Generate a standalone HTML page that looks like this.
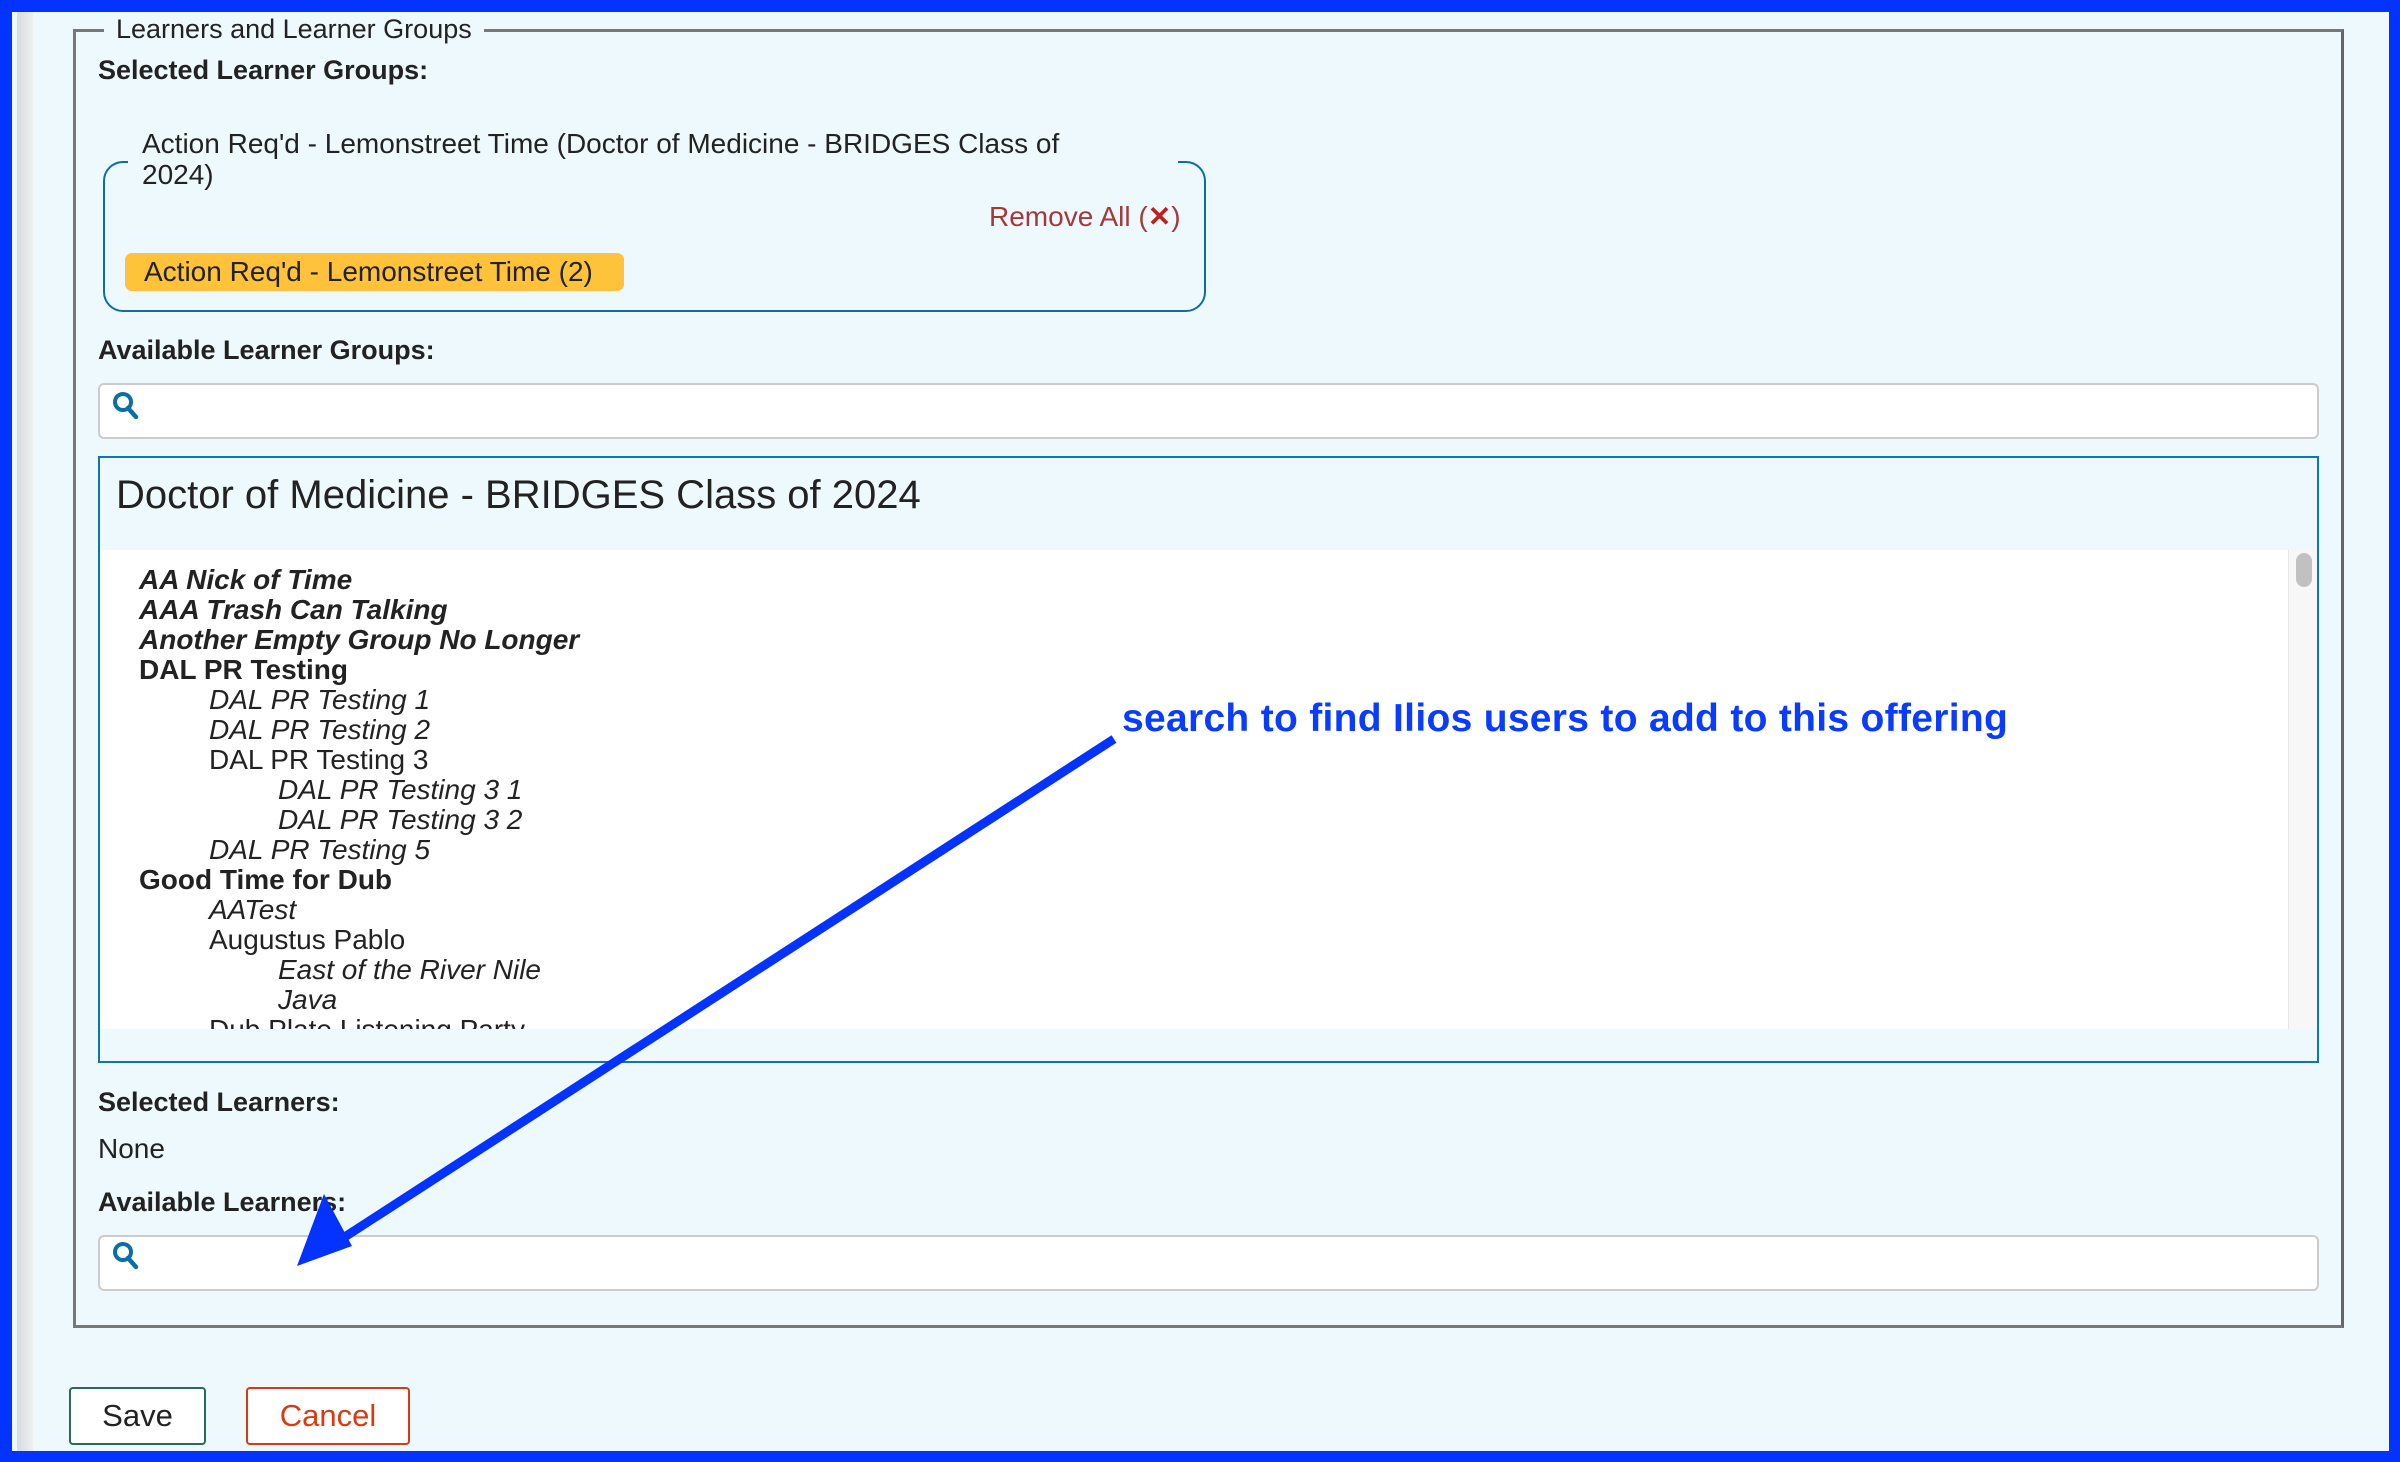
<!DOCTYPE html>
<html><head><meta charset="utf-8"><style>
*{margin:0;padding:0;box-sizing:border-box}
body{width:2400px;height:1462px;overflow:hidden;background:#eef9fe;font-family:"Liberation Sans",sans-serif;color:#222;position:relative}
.a{position:absolute;white-space:nowrap}
.frame{position:absolute;left:0;top:0;width:2400px;height:1462px;border:solid #0433ff;border-width:12px 11px 11px 12px}
.strip{position:absolute;left:17px;top:12px;width:16px;height:1440px;background:linear-gradient(90deg,#d8dcdf,#eef0f1)}
.fs{position:absolute;left:73px;top:29px;width:2271px;height:1299px;border:3px solid #777;border-right-color:#666}
.lbl{font-weight:bold;font-size:27px}
.inp{position:absolute;left:98px;width:2221px;height:56px;background:#fff;border:2px solid #ccc;border-radius:6px}
.list div{position:absolute;font-size:28px;white-space:nowrap}
.b{font-weight:bold}.i{font-style:italic}
</style></head><body>
<div class="strip"></div>
<div class="fs"></div>
<div class="a" style="left:104px;top:14px;background:#eef9fe;padding:0 12px;font-size:27px;">Learners and Learner Groups</div>
<div class="a lbl" style="left:98px;top:55px">Selected Learner Groups:</div>

<div style="position:absolute;left:103px;top:161px;width:1103px;height:151px;border:2px solid #0b6fa4;border-radius:20px"></div>
<div class="a" style="left:128px;top:128px;background:#eef9fe;padding:0 14px;font-size:28px;line-height:31px;width:1050px">Action Req'd - Lemonstreet Time (Doctor of Medicine - BRIDGES Class of<br>2024)</div>
<div class="a" style="left:989px;top:200px;font-size:28px;color:#a33a3a">Remove All (<b style="color:#b22">✕</b>)</div>
<div class="a" style="left:125px;top:253px;width:499px;height:38px;background:#ffc23a;border-radius:7px;font-size:28px;line-height:38px;padding-left:19px">Action Req'd - Lemonstreet Time (2)</div>

<div class="a lbl" style="left:98px;top:335px">Available Learner Groups:</div>
<div class="inp" style="top:383px"></div>
<svg class="a" style="left:110px;top:390px" width="32" height="32" viewBox="0 0 32 32"><circle cx="13" cy="12" r="8" fill="none" stroke="#0a6fa7" stroke-width="4"/><line x1="18" y1="18" x2="26" y2="27" stroke="#0a6fa7" stroke-width="4.5" stroke-linecap="round"/></svg>

<div style="position:absolute;left:98px;top:456px;width:2221px;height:607px;border:2px solid #0b78b3"></div>
<div class="a" style="left:116px;top:473px;font-size:40px">Doctor of Medicine - BRIDGES Class of 2024</div>
<div style="position:absolute;left:100px;top:550px;width:2188px;height:479px;background:#fff;overflow:hidden" class="list">
<div class="b i" style="left:39px;top:14px">AA Nick of Time</div>
<div class="b i" style="left:39px;top:44px">AAA Trash Can Talking</div>
<div class="b i" style="left:39px;top:74px">Another Empty Group No Longer</div>
<div class="b" style="left:39px;top:104px">DAL PR Testing</div>
<div class="i" style="left:109px;top:134px">DAL PR Testing 1</div>
<div class="i" style="left:109px;top:164px">DAL PR Testing 2</div>
<div style="left:109px;top:194px">DAL PR Testing 3</div>
<div class="i" style="left:178px;top:224px">DAL PR Testing 3 1</div>
<div class="i" style="left:178px;top:254px">DAL PR Testing 3 2</div>
<div class="i" style="left:109px;top:284px">DAL PR Testing 5</div>
<div class="b" style="left:39px;top:314px">Good Time for Dub</div>
<div class="i" style="left:109px;top:344px">AATest</div>
<div style="left:109px;top:374px">Augustus Pablo</div>
<div class="i" style="left:178px;top:404px">East of the River Nile</div>
<div class="i" style="left:178px;top:434px">Java</div>
<div style="left:109px;top:464px">Dub Plate Listening Party</div>
</div>
<div style="position:absolute;left:2288px;top:550px;width:29px;height:479px;background:#f7f7f7;border-left:1px solid #e6e6e6"></div>
<div style="position:absolute;left:2296px;top:553px;width:16px;height:34px;background:#c1c1c1;border-radius:8px"></div>

<div class="a lbl" style="left:98px;top:1087px">Selected Learners:</div>
<div class="a" style="left:98px;top:1133px;font-size:28px">None</div>
<div class="a lbl" style="left:98px;top:1187px">Available Learners:</div>
<div class="inp" style="top:1235px"></div>
<svg class="a" style="left:110px;top:1240px" width="32" height="32" viewBox="0 0 32 32"><circle cx="13" cy="12" r="8" fill="none" stroke="#0a6fa7" stroke-width="4"/><line x1="18" y1="18" x2="26" y2="27" stroke="#0a6fa7" stroke-width="4.5" stroke-linecap="round"/></svg>

<div class="a" style="left:69px;top:1387px;width:137px;height:58px;border:2px solid #2a6b55;border-radius:4px;background:#fff;font-size:31px;line-height:54px;text-align:center">Save</div>
<div class="a" style="left:246px;top:1387px;width:164px;height:58px;border:2px solid #d83a12;border-radius:4px;background:#fff;font-size:31px;line-height:54px;text-align:center;color:#d83a12">Cancel</div>

<div class="a" style="left:1122px;top:697px;font-size:39px;letter-spacing:0.3px;font-weight:bold;color:#0a3cff">search to find Ilios users to add to this offering</div>
<svg class="a" style="left:0;top:0" width="2400" height="1462"><line x1="1114" y1="739" x2="340" y2="1240" stroke="#0433ff" stroke-width="9"/><polygon points="297,1266 324,1194 352,1246" fill="#0433ff"/></svg>
<div class="frame"></div>
</body></html>
